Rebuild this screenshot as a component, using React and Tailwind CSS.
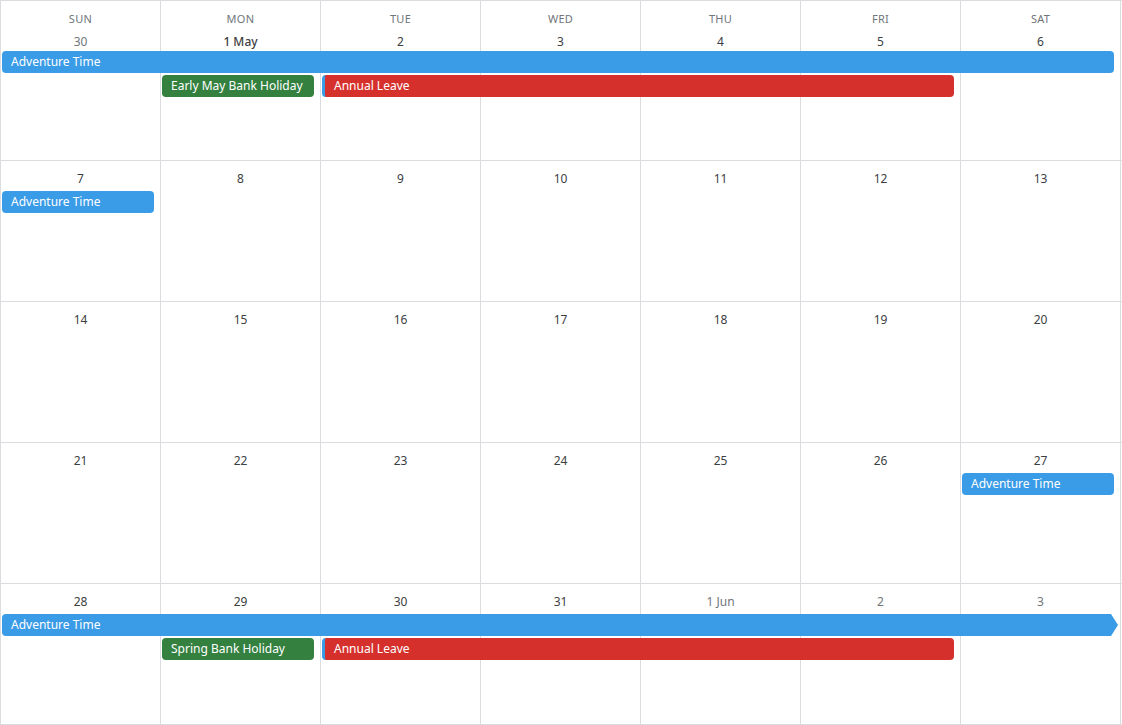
import React from 'react'

const days = ['SUN', 'MON', 'TUE', 'WED', 'THU', 'FRI', 'SAT']

const weeks = [
  {
    dates: [['30', 'muted'], ['1 May', 'bold'], ['2'], ['3'], ['4'], ['5'], ['6']],
    events: [
      [{ title: 'Adventure Time', start: 1, span: 7, color: 'blue' }],
      [
        { title: 'Early May Bank Holiday', start: 2, span: 1, color: 'green' },
        { title: 'Annual Leave', start: 3, span: 4, color: 'red' },
      ],
    ],
  },
  {
    dates: [['7'], ['8'], ['9'], ['10'], ['11'], ['12'], ['13']],
    events: [[{ title: 'Adventure Time', start: 1, span: 1, color: 'blue' }]],
  },
  { dates: [['14'], ['15'], ['16'], ['17'], ['18'], ['19'], ['20']], events: [] },
  {
    dates: [['21'], ['22'], ['23'], ['24'], ['25'], ['26'], ['27']],
    events: [[{ title: 'Adventure Time', start: 7, span: 1, color: 'blue' }]],
  },
  {
    dates: [['28'], ['29'], ['30'], ['31'], ['1 Jun', 'muted'], ['2', 'muted'], ['3', 'muted']],
    events: [
      [{ title: 'Adventure Time', start: 1, span: 7, color: 'blue', arrow: true }],
      [
        { title: 'Spring Bank Holiday', start: 2, span: 1, color: 'green' },
        { title: 'Annual Leave', start: 3, span: 4, color: 'red' },
      ],
    ],
  },
]

const startCls = {
  1: 'col-start-1', 2: 'col-start-2', 3: 'col-start-3', 4: 'col-start-4',
  5: 'col-start-5', 6: 'col-start-6', 7: 'col-start-7',
}
const spanCls = { 1: 'col-span-1', 4: 'col-span-4', 7: 'col-span-7' }
const colorCls = {
  blue: 'bg-[#3a9be6]',
  green: 'bg-[#33803f]',
  red: 'bg-[#d6302c] border-l-[3px] border-[#3a9be6]',
}

function Event({ ev }) {
  const shape = ev.arrow
    ? 'mr-[3px] rounded-l [clip-path:polygon(0_0,calc(100%-7px)_0,100%_50%,calc(100%-7px)_100%,0_100%)]'
    : 'mr-[7px] rounded'
  return (
    <div
      className={`${startCls[ev.start]} ${spanCls[ev.span]} ${colorCls[ev.color]} ${shape} ml-px h-[22px] flex items-center pl-[9px] text-white text-[12px] truncate`}
    >
      {ev.title}
    </div>
  )
}

export default function App() {
  return (
    <div className="w-[1122px] h-[725px] bg-white font-['Roboto','Liberation_Sans',sans-serif] border-l border-[#dadce0]">
      {weeks.map((week, wi) => (
        <div key={wi} className={`relative border-b border-[#dadce0] ${wi === 0 ? 'h-[161px] border-t' : 'h-[141px]'}`}>
          <div className="grid grid-cols-[repeat(7,160px)] h-full">
            {week.dates.map(([d, kind], di) => (
              <div key={di} className="border-r border-[#dadce0] flex flex-col items-center">
                {wi === 0 && <div className="mt-[10px] text-[11px] text-[#70757a] tracking-wide">{days[di]}</div>}
                <div
                  className={`text-[12px] ${wi === 0 ? 'mt-[5px]' : 'mt-[9px]'} ${
                    kind === 'muted' ? 'text-[#70757a]' : kind === 'bold' ? 'text-[#3c4043] font-medium' : 'text-[#3c4043]'
                  }`}
                >
                  {d}
                </div>
              </div>
            ))}
          </div>
          <div className={`absolute left-0 right-0 ${wi === 0 ? 'top-[50px]' : 'top-[30px]'} flex flex-col gap-[2px]`}>
            {week.events.map((row, ri) => (
              <div key={ri} className="grid grid-cols-[repeat(7,160px)]">
                {row.map((ev, ei) => (
                  <Event key={ei} ev={ev} />
                ))}
              </div>
            ))}
          </div>
        </div>
      ))}
    </div>
  )
}
